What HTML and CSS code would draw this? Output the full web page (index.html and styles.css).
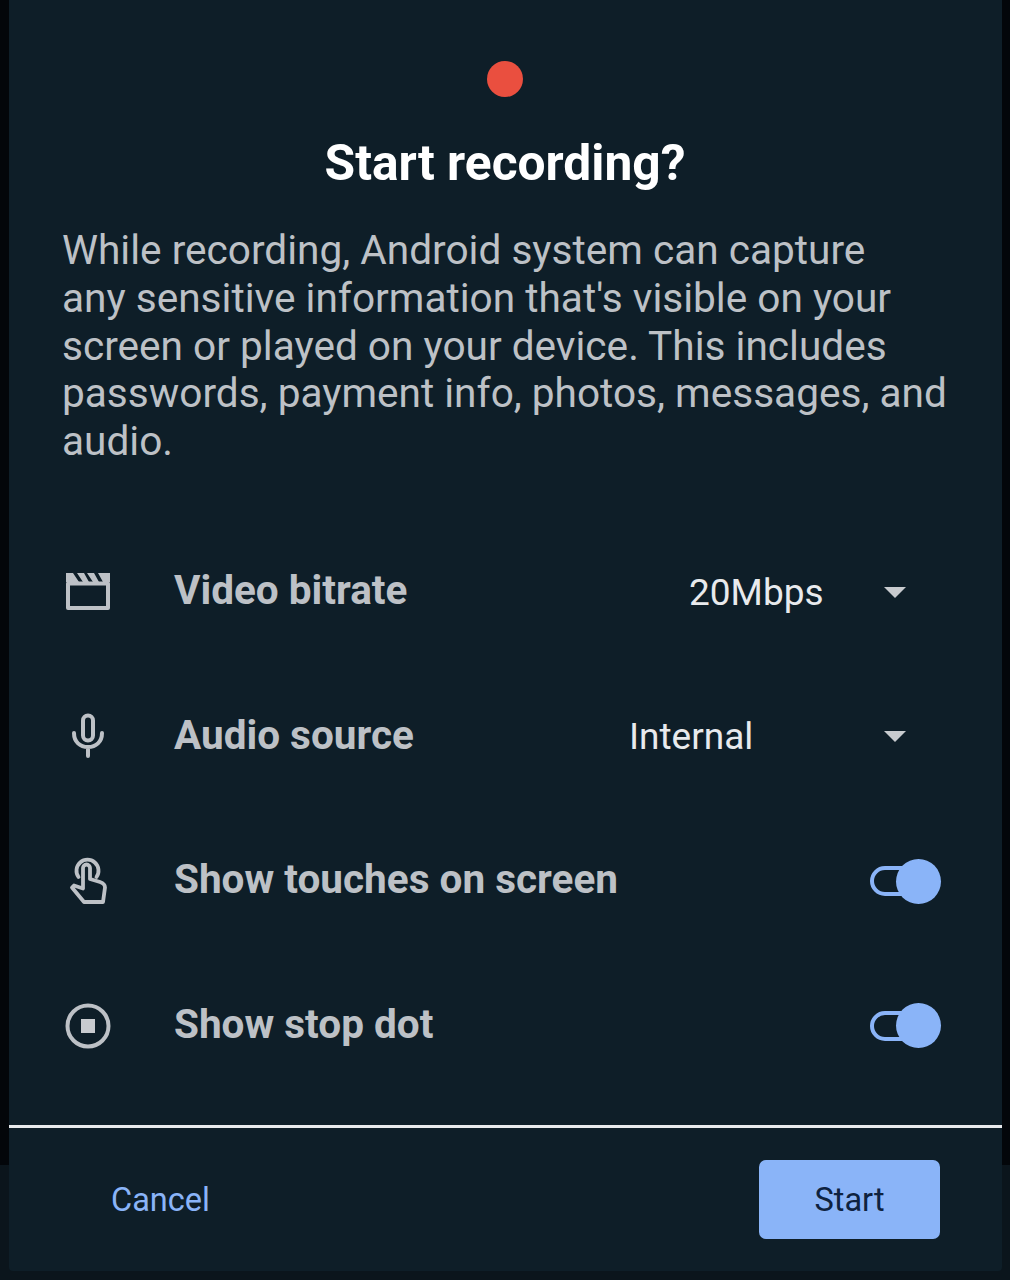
FILE: index.html
```html
<!DOCTYPE html>
<html lang="en">
<head>
    <meta charset="UTF-8">
    <meta name="viewport" content="width=device-width, initial-scale=1.0">
    <title>Start recording?</title>
    <link rel="stylesheet" href="styles.css">
</head>
<body>

<div class="dialog">
    <div class="content">
        <div class="rec-dot"></div>
        <h2 class="title">Start recording?</h2>
        <p class="warning">While recording, Android system can capture<br>any sensitive information that's visible on your<br>screen or played on your device. This includes<br>passwords, payment info, photos, messages, and<br>audio.</p>

        <div class="options">
            <div class="row">
                <svg class="icon" viewBox="0 0 48 48"><path d="M4 15.500V40h40V15.500z" fill="none" stroke="#bdc1c6" stroke-width="4" stroke-linejoin="round"/><path d="M2 5h7l6 9h-13zM13 5h7l5 9h-6zM23 5h7l5 9h-6zM34 5h12v9h-7z" fill="#bdc1c6"/></svg>
                <span class="label">Video bitrate</span>
                <div class="select select-bitrate"><span>20Mbps</span><i class="arrow"></i></div>
            </div>
            <div class="row">
                <svg class="icon" viewBox="0 0 48 48"><rect x="19" y="2.500" width="10" height="25" rx="5" fill="none" stroke="#bdc1c6" stroke-width="4"/><path d="M10 20c0 9 6 14 14 14s14-5 14-14M24 34v9" fill="none" stroke="#bdc1c6" stroke-width="4" stroke-linecap="round"/></svg>
                <span class="label">Audio source</span>
                <div class="select select-audio"><span>Internal</span><i class="arrow"></i></div>
            </div>
            <div class="row">
                <svg class="icon" viewBox="0 0 48 48"><path d="M14.500 20a11 11 0 1 1 18 0" fill="none" stroke="#bdc1c6" stroke-width="3.800" stroke-linecap="round"/><path d="M8 30.500l2-2 9 3V11a3.500 3.500 0 0 1 7 0v11l10 3c3 1 5 2.500 5 5.500L39 45H20z" fill="none" stroke="#bdc1c6" stroke-width="3.800" stroke-linejoin="round"/></svg>
                <span class="label">Show touches on screen</span>
                <div class="switch"><i class="knob"></i></div>
            </div>
            <div class="row">
                <svg class="icon" viewBox="0 0 48 48"><circle cx="24" cy="24" r="20.500" fill="none" stroke="#bdc1c6" stroke-width="4"/><rect x="17" y="17" width="14" height="14" fill="#c8cbcf"/></svg>
                <span class="label">Show stop dot</span>
                <div class="switch"><i class="knob"></i></div>
            </div>
        </div>
    </div>

    <div class="footer">
        <button class="btn-cancel" type="button">Cancel</button>
        <button class="btn-start" type="button">Start</button>
    </div>
</div>

</body>
</html>
```

FILE: styles.css
```css
html {
    background-color: #0b151c;
}

body {
    margin: 0;
    height: 1280px;
    overflow: hidden;
    font-family: Roboto, "Liberation Sans", sans-serif;
    background: linear-gradient(#03060a 1165px, #0b151c 1165px);
}

.dialog {
    width: 993px;
    height: 1271px;
    margin-left: 9px;
    background-color: #0e1e28;
    border-radius: 0 0 4px 4px;
    display: flex;
    flex-direction: column;
}

.content {
    flex: 1;
    padding: 61px 54px 0 53px;
}

.rec-dot {
    width: 36px;
    height: 36px;
    border-radius: 50%;
    background-color: #ea4f3f;
    margin: 0 auto;
}

.title {
    margin: 34px 0 0;
    text-align: center;
    color: #ffffff;
    font-size: 49.700px;
    font-weight: 700;
    line-height: 64px;
}

.warning {
    margin: 32px 0 0;
    color: #bdc1c6;
    font-size: 40.600px;
    line-height: 47.800px;
    white-space: nowrap;
}

.options {
    margin-top: 54px;
    margin-right: 7px;
}

.row {
    height: 144.500px;
    display: flex;
    align-items: center;
}

.icon {
    width: 48px;
    height: 48px;
    margin-left: 2px;
    flex-shrink: 0;
}

.label {
    margin-left: 62px;
    color: #bdc1c6;
    font-size: 40.500px;
    font-weight: 700;
    position: relative;
    top: -2px;
}

.select {
    margin-left: auto;
    margin-right: 35px;
    display: flex;
    align-items: center;
    justify-content: space-between;
    color: #e8eaed;
    font-size: 37px;
}

.select-bitrate {
    width: 217px;
}

.select-audio {
    width: 277px;
}

.arrow {
    width: 0;
    height: 0;
    border-left: 11px solid transparent;
    border-right: 11px solid transparent;
    border-top: 11px solid #c8cbcf;
}

.switch {
    margin-left: auto;
    margin-right: 16px;
    width: 55px;
    height: 30px;
    box-sizing: border-box;
    border: 4px solid #8ab4f8;
    border-radius: 15px;
    position: relative;
}

.knob {
    position: absolute;
    right: -20px;
    top: -11.500px;
    width: 45px;
    height: 45px;
    border-radius: 50%;
    background-color: #8ab4f8;
}

.footer {
    height: 146px;
    border-top: 3px solid #e8eaed;
    padding: 32px 62px 0 102px;
    display: flex;
    justify-content: space-between;
    align-items: flex-start;
    box-sizing: border-box;
}

.btn-cancel,
.btn-start {
    border: 0;
    font-family: inherit;
    font-size: 32.500px;
    font-weight: 400;
}

.btn-cancel {
    background: none;
    padding: 0;
    height: 79px;
    color: #8ab4f8;
}

.btn-start {
    width: 181px;
    height: 79px;
    background-color: #8ab4f8;
    border-radius: 7px;
    color: #0e2240;
    font-weight: 400;
}
```
